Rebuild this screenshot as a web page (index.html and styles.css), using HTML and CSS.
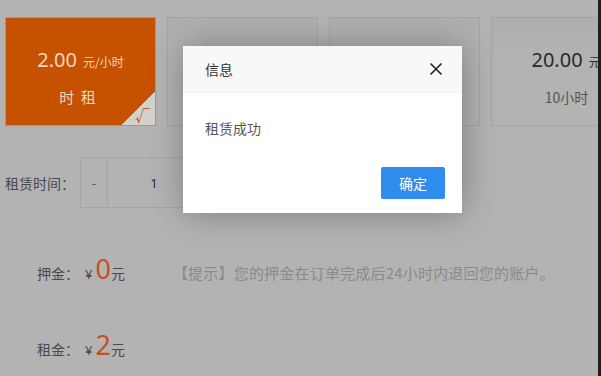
FILE: index.html
```html
<!DOCTYPE html>
<html lang="zh-CN">
<head>
<meta charset="utf-8">
<title>租赁</title>
<link rel="stylesheet" href="styles.css">
</head>
<body>
<div class="page">
  <div class="plans">
    <div class="plan active">
      <div class="price">2.00 <span class="unit">元/小时</span></div>
      <div class="name">时 租</div>
      <div class="check"><span>√</span></div>
    </div>
    <div class="plan">
      <div class="price">5.00 <span class="unit">元/小时</span></div>
      <div class="name">3小时</div>
    </div>
    <div class="plan">
      <div class="price">10.00 <span class="unit">元/小时</span></div>
      <div class="name">5小时</div>
    </div>
    <div class="plan last">
      <div class="price">20.00 <span class="unit">元/小时</span></div>
      <div class="name">10小时</div>
    </div>
  </div>

  <div class="time-row">
    <span class="label">租赁时间：</span>
    <div class="stepper">
      <span class="minus">-</span>
      <span class="qty">1</span>
      <span class="plus">+</span>
    </div>
  </div>

  <div class="money-row deposit">
    <span class="mlabel">押金：</span><span class="yen">¥</span><span class="amount">0</span><span class="yuan">元</span>
    <span class="tip">【提示】您的押金在订单完成后24小时内退回您的账户。</span>
  </div>

  <div class="money-row rent">
    <span class="mlabel">租金：</span><span class="yen">¥</span><span class="amount">2</span><span class="yuan">元</span>
  </div>

  <div class="dialog">
    <div class="dialog-title">
      <span>信息</span>
      <svg class="close" width="14" height="14" viewBox="0 0 14 14"><path d="M1.5 1.5L12.5 12.5M12.5 1.5L1.5 12.5" stroke="#222" stroke-width="1.6" fill="none"/></svg>
    </div>
    <div class="dialog-body">租赁成功</div>
    <div class="dialog-foot"><span class="btn">确定</span></div>
  </div>
</div>
<div class="edge"></div>
</body>
</html>
```

FILE: styles.css
```css
html, body {
  margin: 0;
  padding: 0;
}
body {
  width: 601px;
  height: 376px;
  overflow: hidden;
  display: flex;
  background: #b3b3b3;
  font-family: "Noto Sans CJK SC", "Noto Sans", sans-serif;
  color: #4a4a4a;
}
.page {
  flex: 1;
  position: relative;
  overflow: hidden;
  padding: 17px 0 0 5px;
}
.edge {
  width: 3px;
  background: #1f1f1f;
  flex-shrink: 0;
}
.plans {
  display: flex;
  gap: 11px;
}
.plan {
  position: relative;
  flex-shrink: 0;
  width: 149px;
  height: 107px;
  border: 1px solid #a4a4a4;
  background: linear-gradient(#aeaeae, #b3b3b3 40%);
  display: flex;
  flex-direction: column;
  align-items: center;
  overflow: hidden;
}
.plan .price {
  margin-top: 28px;
  font-family: "Noto Sans", "Noto Sans CJK SC", sans-serif;
  font-size: 20px;
  line-height: 28px;
  color: #2a2a2a;
  white-space: nowrap;
}
.plan .unit {
  font-family: "Noto Sans CJK SC", sans-serif;
  font-size: 12px;
  margin-left: 1px;
}
.plan.last .price {
  margin-left: 28px;
}
.plan .name {
  margin-top: 12px;
  font-size: 14px;
  line-height: 18px;
  color: #555;
}
.plan.active {
  background: #c65200;
  border-color: #cf8a55;
}
.plan.active .price,
.plan.active .name {
  color: #eed5c4;
}
.plan.active .name {
  font-size: 15px;
  word-spacing: 3px;
  margin-right: 6px;
}
.check {
  position: absolute;
  right: 0;
  bottom: 0;
  width: 34px;
  height: 34px;
  background: linear-gradient(135deg, transparent 50%, #d4d0cc 50%);
}
.check span {
  position: absolute;
  right: 5px;
  bottom: 0;
  font-size: 15px;
  line-height: 20px;
  color: #c8451a;
}
.time-row {
  display: flex;
  align-items: center;
  margin-top: 31px;
}
.label {
  width: 75px;
  font-size: 14px;
}
.stepper {
  display: flex;
  height: 49px;
  border: 1px solid #a5a5a5;
  font-family: "Noto Sans", sans-serif;
  font-size: 13px;
  color: #333;
}
.stepper span {
  display: flex;
  align-items: center;
  justify-content: center;
}
.minus {
  width: 26px;
  border-right: 1px solid #a5a5a5;
  color: #555;
}
.qty {
  width: 92px;
  color: #2a2240;
}
.plus {
  width: 26px;
  border-left: 1px solid #a5a5a5;
}
.money-row {
  display: flex;
  align-items: baseline;
  padding-left: 32px;
  font-size: 14px;
}
.deposit {
  margin-top: 43px;
}
.rent {
  margin-top: 40px;
}
.mlabel {
  color: #4a4a4a;
  width: 48px;
}
.yen {
  font-family: "Noto Sans", sans-serif;
  font-size: 13px;
  color: #4a4a4a;
}
.amount {
  font-family: "Noto Sans", sans-serif;
  font-size: 27px;
  line-height: 36px;
  color: #c9501a;
  margin-left: 3px;
}
.yuan {
  color: #4a4a4a;
}
.tip {
  margin-left: 48px;
  font-size: 15px;
  letter-spacing: 0.2px;
  color: #8a8a8a;
  white-space: nowrap;
}
.dialog {
  position: absolute;
  left: 183px;
  top: 46px;
  width: 279px;
  height: 167px;
  background: #fff;
  box-shadow: 1px 1px 30px rgba(0, 0, 0, 0.3);
  display: flex;
  flex-direction: column;
}
.dialog-title {
  height: 46px;
  background: #f8f8f8;
  border-bottom: 1px solid #f0f0f0;
  display: flex;
  align-items: center;
  justify-content: space-between;
  padding: 0 19px 0 22px;
  font-size: 14px;
  color: #333;
}
.dialog-body {
  padding: 25px 22px 0;
  font-size: 14px;
  line-height: 20px;
  color: #555;
}
.dialog-foot {
  display: flex;
  justify-content: flex-end;
  padding: 29px 17px 0;
}
.btn {
  width: 64px;
  height: 32px;
  line-height: 32px;
  text-align: center;
  background: #2e8ded;
  color: #fff;
  font-size: 14px;
  border-radius: 2px;
}
```
